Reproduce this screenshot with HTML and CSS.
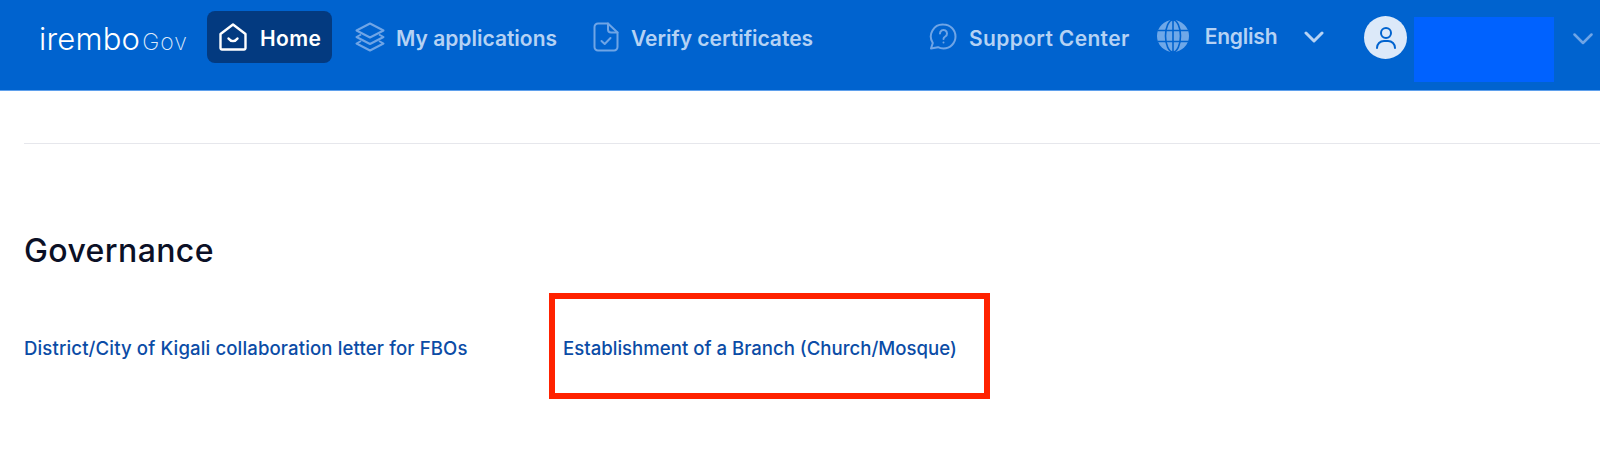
FILE: index.html
```html
<!DOCTYPE html>
<html lang="en">
<head>
<meta charset="utf-8">
<title>IremboGov</title>
<link rel="stylesheet" href="styles.css">
</head>
<body>
<header class="topbar">
  <a class="logo"><span class="logo-main">irembo</span><span class="logo-gov">Gov</span></a>
  <nav class="nav">
    <a class="nav-item nav-item-active">
      <svg class="icon-home" viewBox="0 0 28 28" fill="none" stroke="#fff" stroke-width="2.400" stroke-linecap="round" stroke-linejoin="round"><path d="M1.500 11 14 1.500 26.500 11V25a1.500 1.500 0 0 1-1.500 1.500H3A1.500 1.500 0 0 1 1.500 25Z"/><path d="M9.500 15.500c2.500 3.500 6.500 3.500 9 0"/></svg>
      <span>Home</span>
    </a>
    <a class="nav-item nav-apps">
      <svg class="icon-layers" viewBox="0 0 30 30" fill="none" stroke="#6fa5e6" stroke-width="2" stroke-linejoin="round"><path d="M15 1.500 28.500 8.500 15 15.500 1.500 8.500Z"/><path d="M6 12.500 1.500 15 15 22 28.500 15 24 12.500"/><path d="M6 19 1.500 21.500 15 28.500 28.500 21.500 24 19"/></svg>
      <span>My applications</span>
    </a>
    <a class="nav-item nav-verify">
      <svg class="icon-file" viewBox="0 0 26 30" fill="none" stroke="#6fa5e6" stroke-width="2" stroke-linecap="round" stroke-linejoin="round"><path d="M15 1.500H5A3.500 3.500 0 0 0 1.500 5v20A3.500 3.500 0 0 0 5 28.500h16a3.500 3.500 0 0 0 3.500-3.500V10.500Z"/><path d="M15 1.500v6a3 3 0 0 0 3 3h6.500"/><path d="m8.500 19 3.200 3 5.800-6"/></svg>
      <span>Verify certificates</span>
    </a>
  </nav>
  <div class="tools">
    <a class="nav-item nav-support">
      <svg class="icon-help" viewBox="0 0 28 28" fill="none" stroke="#6fa5e6" stroke-width="2" stroke-linecap="round" stroke-linejoin="round"><path d="M14.500 1.500a12 12 0 0 1 0 24c-2 0-4-.5-5.500-1.300L2 25.500l1.800-5.500A12 12 0 0 1 14.500 1.500Z"/><path d="M11 10.500a3.500 3.500 0 1 1 5.300 3c-1.200.8-1.800 1.300-1.800 2.500"/><path d="M14.500 19.500v.1"/></svg>
      <span>Support Center</span>
    </a>
    <a class="nav-item nav-lang">
      <svg class="icon-globe" viewBox="0 0 32 32"><circle cx="16" cy="16" r="16" fill="#6fa8e8"/><g fill="none" stroke="#0063cf" stroke-width="1.600"><ellipse cx="16" cy="16" rx="7.500" ry="16"/><path d="M16 0v32M1 10.500h30M1 21.500h30"/></g></svg>
      <span class="lang-label">English</span>
      <svg class="chevron chevron-lang" viewBox="0 0 20 12" fill="none" stroke="#b7d3f4" stroke-width="3" stroke-linecap="round" stroke-linejoin="round"><path d="m2 2 8 8 8-8"/></svg>
    </a>
    <div class="account">
      <span class="avatar">
        <svg class="icon-user" viewBox="0 0 22 24" fill="none" stroke="#0063cf" stroke-width="2" stroke-linecap="round"><circle cx="11" cy="7" r="5"/><path d="M2 22c0-4 3-7 7-7h4c4 0 7 3 7 7"/></svg>
      </span>
      <span class="redacted"></span>
      <svg class="chevron chevron-account" viewBox="0 0 20 12" fill="none" stroke="#6fa5e6" stroke-width="2.500" stroke-linecap="round" stroke-linejoin="round"><path d="m1.500 1.500 8.500 8.500 8.500-8.500"/></svg>
    </div>
  </div>
</header>
<main class="content">
  <hr class="divider">
  <h2 class="section-title">Governance</h2>
  <ul class="services">
    <li class="service"><a class="service-link service-link-wide">District/City of Kigali collaboration letter for FBOs</a></li>
    <li class="service service-marked"><a class="service-link">Establishment of a Branch (Church/Mosque)</a></li>
  </ul>
</main>
</body>
</html>
```
FILE: styles.css
```css
* { box-sizing: border-box; }
html, body { margin: 0; padding: 0; }
body {
  width: 1600px;
  height: 464px;
  overflow: hidden;
  background: #fff;
  font-family: Inter, "Liberation Sans", sans-serif;
}
.topbar {
  height: 91px;
  padding: 11px 7px 0 39px;
  display: flex;
  align-items: flex-start;
  background: #0063cf;
  border-bottom: 1px solid #5fa0ec;
}
.logo {
  width: 168px;
  height: 52px;
  display: flex;
  align-items: baseline;
  padding-top: 12px;
  color: #fff;
  flex: none;
}
.logo-main {
  font-weight: 300;
  font-size: 31px;
  line-height: 32px;
  letter-spacing: 0.2px;
}
.logo-gov {
  margin-left: 2px;
  font-weight: 200;
  font-size: 23px;
  letter-spacing: 1px;
  color: #dbe8f9;
}
.nav, .tools { display: flex; align-items: flex-start; }
.nav-item {
  height: 52px;
  display: flex;
  align-items: center;
  color: #b5d2f4;
  font-size: 21px;
  font-weight: 600;
  white-space: nowrap;
}
.nav-item > span { padding-top: 2px; }
.nav-item > .lang-label { padding-top: 0; margin-top: -2px; }
.nav-item-active {
  width: 125px;
  padding-left: 12px;
  gap: 13px;
  background: #033a80;
  border-radius: 8px;
  color: #fff;
  letter-spacing: 0.4px;
}
.nav-apps { margin-left: 23px; gap: 11px; }
.nav-verify { margin-left: 36px; gap: 12px; }
.tools { margin-left: 116px; }
.nav-support { gap: 12px; letter-spacing: 0.35px; }
.nav-lang { margin-left: 27px; gap: 16px; letter-spacing: -0.2px; }
.icon-home { width: 28px; height: 28px; }
.icon-layers { width: 30px; height: 30px; }
.icon-file { width: 26px; height: 30px; }
.icon-help { width: 28px; height: 28px; }
.icon-globe { width: 32px; height: 32px; margin-top: -2px; }
.chevron { flex: none; }
.chevron-lang { width: 20px; height: 12px; margin-left: 11px; }
.account {
  margin-left: 40px;
  display: flex;
  align-items: flex-start;
}
.avatar {
  width: 43px;
  height: 43px;
  margin-top: 5px;
  display: flex;
  align-items: center;
  justify-content: center;
  border-radius: 50%;
  background: #dce9f9;
}
.icon-user { width: 22px; height: 24px; }
.redacted {
  width: 140px;
  height: 65px;
  margin: 6px 0 0 7px;
  background: #0062ff;
}
.chevron-account { width: 20px; height: 12px; margin: 22px 0 0 19px; }
.content { padding: 0 0 0 24px; }
.divider {
  height: 1px;
  margin: 52px 0 0;
  border: 0;
  background: #e6e7ec;
}
.section-title {
  margin: 89px 0 0;
  color: #0b1026;
  font-size: 32px;
  line-height: 36px;
  font-weight: 500;
  letter-spacing: 0.4px;
}
.services {
  list-style: none;
  margin: 0;
  padding: 0;
  display: flex;
  align-items: center;
}
.service {
  height: 106px;
  margin-top: 24px;
  padding-top: 4px;
  display: flex;
  align-items: center;
  width: 525px;
}
.service-marked {
  width: 441px;
  border: 6px solid #ff2200;
  padding-left: 8px;
}
.service-link {
  color: #0b4ca6;
  font-size: 18.600px;
  font-weight: 500;
  white-space: nowrap;
}
.service-link-wide { letter-spacing: 0.12px; }
```
